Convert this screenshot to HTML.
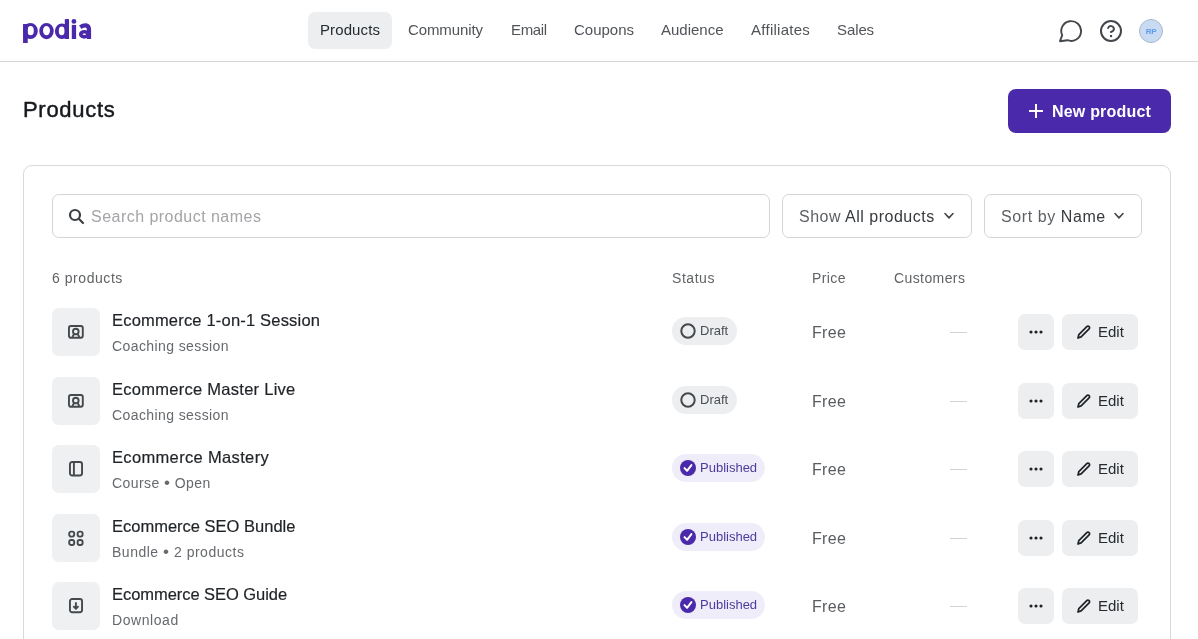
<!DOCTYPE html>
<html><head><meta charset="utf-8">
<style>
*{box-sizing:border-box;margin:0;padding:0}
html,body{width:1198px;height:639px;overflow:hidden;background:#fff;font-family:"Liberation Sans",sans-serif}
.a{position:absolute;white-space:nowrap;will-change:transform}
.hdr{position:absolute;left:0;top:0;width:1198px;height:62px;border-bottom:1px solid #d6d6d6}
.nav{font-size:15px;line-height:20px;color:#505458}
.pill{position:absolute;left:308px;top:12px;width:84px;height:37px;background:#eceef0;border-radius:7px}
.ttl{font-size:22px;line-height:28px;color:#15191d;-webkit-text-stroke:0.45px #15191d}
.btn{position:absolute;left:1008px;top:89px;width:163px;height:44px;background:#4a2aab;border-radius:8px}
.card{position:absolute;left:23px;top:165px;width:1148px;height:600px;border:1px solid #d9d9d9;border-radius:9px}
.inp{position:absolute;top:194px;height:44px;border:1px solid #d5d5d5;border-radius:7px}
.ph{font-size:16px;line-height:20px;color:#a2a4a7}
.dd{font-size:16px;line-height:20px;color:#5c5f63}
.dd b{font-weight:normal;color:#36393d}
.th{font-size:14px;line-height:18px;color:#606366}
.ib{position:absolute;left:52px;width:48px;height:48px;background:#eef0f1;border-radius:7px}
.pt{font-size:16.5px;line-height:20px;color:#1f2327;-webkit-text-stroke:0.2px #1f2327}
.ps{font-size:14px;line-height:18px;color:#66696d}
.bul{font-size:17px;line-height:0;vertical-align:0.5px}
.badge{position:absolute;left:672px;height:28px;border-radius:14px}
.draft{background:#eceef0;width:65px}
.pub{background:#efedf9;width:93px}
.bt{font-size:13px;line-height:16px}
.free{font-size:16px;line-height:20px;color:#595c60}
.dash{position:absolute;left:950px;width:17px;height:1px;background:#d2d3d5}
.sb{position:absolute;height:36px;background:#eceef0;border-radius:7px}
.et{font-size:15px;line-height:20px;color:#272b2f}
</style></head><body>
<div class="hdr"></div>
<!-- logo -->
<svg class="a" style="left:0;top:0" width="100" height="50" viewBox="0 0 100 50" fill="#4a2aab"><path fill-rule="evenodd" d="M23.00 31.0A7.4 8.0 0 1 0 37.80 31.0A7.4 8.0 0 1 0 23.00 31.0ZM27.40 30.7A3.2 4.6 0 1 0 33.80 30.7A3.2 4.6 0 1 0 27.40 30.7Z"/><rect x="23.05" y="24" width="4.7" height="19"/><path fill-rule="evenodd" d="M39.25 31.1A7.25 8.1 0 1 0 53.75 31.1A7.25 8.1 0 1 0 39.25 31.1ZM43.00 30.6A3.5 4.7 0 1 0 50.00 30.6A3.5 4.7 0 1 0 43.00 30.6Z"/><path fill-rule="evenodd" d="M54.90 31.25A7.0 7.75 0 1 0 68.90 31.25A7.0 7.75 0 1 0 54.90 31.25ZM58.80 30.9A2.9 4.3 0 1 0 64.60 30.9A2.9 4.3 0 1 0 58.80 30.9Z"/><rect x="64.8" y="19.05" width="4.2" height="19.95"/><rect x="71.8" y="24.9" width="4.3" height="14.1"/><circle cx="73.95" cy="21.4" r="2.4"/><path d="M80.3 27.2C82.5 25.6 84.5 25.3 86 25.4C88.2 25.8 89 27.5 89 30V39" fill="none" stroke="#4a2aab" stroke-width="4.2"/><ellipse cx="84.3" cy="34.3" rx="3.6" ry="2.6" fill="none" stroke="#4a2aab" stroke-width="3.6"/></svg>
<!-- nav -->
<div class="pill"></div>
<div class="a nav" style="left:320px;top:20px;color:#262b30;letter-spacing:0.1px">Products</div>
<div class="a nav" style="left:408px;top:20px;letter-spacing:-0.1px">Community</div>
<div class="a nav" style="left:511px;top:20px;letter-spacing:-0.35px">Email</div>
<div class="a nav" style="left:574px;top:20px">Coupons</div>
<div class="a nav" style="left:661px;top:20px">Audience</div>
<div class="a nav" style="left:751px;top:20px;letter-spacing:0.27px">Affiliates</div>
<div class="a nav" style="left:837px;top:20px;letter-spacing:-0.1px">Sales</div>
<!-- right icons -->
<svg class="a" style="left:1058px;top:19px" width="24" height="24" viewBox="0 0 24 24" fill="none" stroke="#44484c" stroke-width="1.9" stroke-linejoin="round"><path d="M2 22.2L4.2 16.2A9.9 9.9 0 1 1 9.5 21.2Z"/></svg>
<svg class="a" style="left:1099px;top:19px" width="24" height="24" viewBox="0 0 24 24" fill="none" stroke="#44484c" stroke-width="2" stroke-linecap="round"><circle cx="12" cy="12" r="10"/><path d="M9.1 9a3 3 0 0 1 5.8 1c0 2-3 3-3 3"/><rect x="11" y="16" width="2.1" height="2.1" fill="#44484c" stroke="none"/></svg>
<div class="a" style="left:1139px;top:19px;width:24px;height:24px;border-radius:50%;background:#c8dbf3;border:1px solid #a9b9cc;font-size:8px;line-height:23px;text-align:center;font-weight:bold;color:#5a9be6;letter-spacing:-0.4px">RP</div>
<!-- title -->
<div class="a ttl" style="left:23px;top:96px;letter-spacing:0.7px">Products</div>
<div class="btn"></div>
<svg class="a" style="left:1028px;top:103px" width="16" height="16" viewBox="0 0 16 16" stroke="#fff" stroke-width="2"><path d="M8 1v14M1 8h14"/></svg>
<div class="a" style="left:1052px;top:102px;font-size:16px;line-height:20px;font-weight:bold;color:#fff;letter-spacing:0.2px">New product</div>
<!-- card -->
<div class="card"></div>
<div class="inp" style="left:52px;width:718px"></div>
<svg class="a" style="left:68px;top:208px" width="17" height="17" viewBox="0 0 17 17" fill="none" stroke="#3c4145" stroke-width="2.2" stroke-linecap="round"><circle cx="7" cy="7" r="5"/><path d="M10.8 10.8l4.2 4.2"/></svg>
<div class="a ph" style="left:91px;top:207px;letter-spacing:0.47px">Search product names</div>
<div class="inp" style="left:782px;width:190px"></div>
<div class="a dd" style="left:799px;top:207px;letter-spacing:0.5px">Show <b>All products</b></div>
<svg class="a" style="left:943px;top:211px" width="12" height="10" viewBox="0 0 12 10" fill="none" stroke="#44484c" stroke-width="1.6" stroke-linecap="round" stroke-linejoin="round"><path d="M2 2.5l4 4.4 4-4.4"/></svg>
<div class="inp" style="left:984px;width:158px"></div>
<div class="a dd" style="left:1001px;top:207px;letter-spacing:0.58px">Sort by <b>Name</b></div>
<svg class="a" style="left:1113px;top:211px" width="12" height="10" viewBox="0 0 12 10" fill="none" stroke="#44484c" stroke-width="1.6" stroke-linecap="round" stroke-linejoin="round"><path d="M2 2.5l4 4.4 4-4.4"/></svg>
<!-- table header -->
<div class="a th" style="left:52px;top:269px;letter-spacing:0.55px">6 products</div>
<div class="a th" style="left:672px;top:269px;letter-spacing:0.55px">Status</div>
<div class="a th" style="left:812px;top:269px;letter-spacing:0.4px">Price</div>
<div class="a th" style="left:894px;top:269px;letter-spacing:0.4px">Customers</div>
<div class="ib" style="top:308.0px"></div>
<svg class="a" style="left:68px;top:324.0px" width="16" height="16" viewBox="0 0 16 16" fill="none" stroke="#45494d" stroke-width="1.9"><rect x="0.95" y="1.95" width="13.85" height="11.85" rx="2"/><circle cx="7.8" cy="7.5" r="2.8"/><path d="M4.3 13L6 10.3M11.4 13L9.7 10.3"/></svg>
<div class="a pt" style="left:112px;top:310.0px;letter-spacing:0.19px">Ecommerce 1-on-1 Session</div>
<div class="a ps" style="left:112px;top:337.0px;letter-spacing:0.4px">Coaching session</div>
<div class="badge draft" style="top:317.0px"></div>
<svg class="a" style="left:679px;top:322.0px" width="18" height="18" viewBox="0 0 18 18" fill="none" stroke="#45494d" stroke-width="2"><circle cx="9" cy="9" r="6.7"/></svg>
<div class="a bt" style="left:700px;top:323.0px;color:#4a4f54">Draft</div>
<div class="a free" style="left:812px;top:323.0px;letter-spacing:0.3px">Free</div>
<div class="dash" style="top:332.0px"></div>
<div class="sb" style="left:1018px;top:314.0px;width:36px"></div>
<svg class="a" style="left:1028px;top:330.0px" width="16" height="4" viewBox="0 0 16 4" fill="#1f2327"><circle cx="3" cy="2" r="1.55"/><circle cx="8" cy="2" r="1.55"/><circle cx="13" cy="2" r="1.55"/></svg>
<div class="sb" style="left:1062px;top:314.0px;width:76px"></div>
<svg class="a" style="left:1076px;top:324.0px" width="16" height="16" viewBox="0 0 16 16" fill="none" stroke="#1f2327" stroke-width="1.7" stroke-linejoin="round"><path d="M2 14l.8-3.4L10.8 2.6a1.6 1.6 0 0 1 2.3 2.3L5.1 12.9z"/></svg>
<div class="a et" style="left:1098px;top:322.0px">Edit</div>
<div class="ib" style="top:376.5px"></div>
<svg class="a" style="left:68px;top:392.5px" width="16" height="16" viewBox="0 0 16 16" fill="none" stroke="#45494d" stroke-width="1.9"><rect x="0.95" y="1.95" width="13.85" height="11.85" rx="2"/><circle cx="7.8" cy="7.5" r="2.8"/><path d="M4.3 13L6 10.3M11.4 13L9.7 10.3"/></svg>
<div class="a pt" style="left:112px;top:378.5px;letter-spacing:0.27px">Ecommerce Master Live</div>
<div class="a ps" style="left:112px;top:405.5px;letter-spacing:0.4px">Coaching session</div>
<div class="badge draft" style="top:385.5px"></div>
<svg class="a" style="left:679px;top:390.5px" width="18" height="18" viewBox="0 0 18 18" fill="none" stroke="#45494d" stroke-width="2"><circle cx="9" cy="9" r="6.7"/></svg>
<div class="a bt" style="left:700px;top:391.5px;color:#4a4f54">Draft</div>
<div class="a free" style="left:812px;top:391.5px;letter-spacing:0.3px">Free</div>
<div class="dash" style="top:400.5px"></div>
<div class="sb" style="left:1018px;top:382.5px;width:36px"></div>
<svg class="a" style="left:1028px;top:398.5px" width="16" height="4" viewBox="0 0 16 4" fill="#1f2327"><circle cx="3" cy="2" r="1.55"/><circle cx="8" cy="2" r="1.55"/><circle cx="13" cy="2" r="1.55"/></svg>
<div class="sb" style="left:1062px;top:382.5px;width:76px"></div>
<svg class="a" style="left:1076px;top:392.5px" width="16" height="16" viewBox="0 0 16 16" fill="none" stroke="#1f2327" stroke-width="1.7" stroke-linejoin="round"><path d="M2 14l.8-3.4L10.8 2.6a1.6 1.6 0 0 1 2.3 2.3L5.1 12.9z"/></svg>
<div class="a et" style="left:1098px;top:390.5px">Edit</div>
<div class="ib" style="top:445.0px"></div>
<svg class="a" style="left:68px;top:461.0px" width="16" height="16" viewBox="0 0 16 16" fill="none" stroke="#45494d" stroke-width="1.9"><rect x="1.95" y="0.95" width="12.1" height="13.6" rx="2.2"/><path d="M5.9 1v13.5"/></svg>
<div class="a pt" style="left:112px;top:447.0px;letter-spacing:0.34px">Ecommerce Mastery</div>
<div class="a ps" style="left:112px;top:474.0px;letter-spacing:0.43px">Course <span class="bul">•</span> Open</div>
<div class="badge pub" style="top:454.0px"></div>
<svg class="a" style="left:680px;top:460.0px" width="16" height="16" viewBox="0 0 16 16"><circle cx="8" cy="8" r="8" fill="#4a2aab"/><path d="M4.5 8.1L7.1 10.8L11.4 5.1" fill="none" stroke="#fff" stroke-width="2" stroke-linecap="round" stroke-linejoin="round"/></svg>
<div class="a bt" style="left:700px;top:460.0px;color:#4d3b9e">Published</div>
<div class="a free" style="left:812px;top:460.0px;letter-spacing:0.3px">Free</div>
<div class="dash" style="top:469.0px"></div>
<div class="sb" style="left:1018px;top:451.0px;width:36px"></div>
<svg class="a" style="left:1028px;top:467.0px" width="16" height="4" viewBox="0 0 16 4" fill="#1f2327"><circle cx="3" cy="2" r="1.55"/><circle cx="8" cy="2" r="1.55"/><circle cx="13" cy="2" r="1.55"/></svg>
<div class="sb" style="left:1062px;top:451.0px;width:76px"></div>
<svg class="a" style="left:1076px;top:461.0px" width="16" height="16" viewBox="0 0 16 16" fill="none" stroke="#1f2327" stroke-width="1.7" stroke-linejoin="round"><path d="M2 14l.8-3.4L10.8 2.6a1.6 1.6 0 0 1 2.3 2.3L5.1 12.9z"/></svg>
<div class="a et" style="left:1098px;top:459.0px">Edit</div>
<div class="ib" style="top:513.5px"></div>
<svg class="a" style="left:68px;top:529.5px" width="16" height="16" viewBox="0 0 16 16" fill="none" stroke="#45494d" stroke-width="1.9"><rect x="1.2" y="1.6" width="5" height="5" rx="2"/><rect x="9.6" y="1.6" width="5" height="5" rx="2"/><rect x="1.2" y="10" width="5" height="5" rx="2"/><rect x="9.6" y="10" width="5" height="5" rx="2"/></svg>
<div class="a pt" style="left:112px;top:515.5px;letter-spacing:0.0px">Ecommerce SEO Bundle</div>
<div class="a ps" style="left:112px;top:542.5px;letter-spacing:0.51px">Bundle <span class="bul">•</span> 2 products</div>
<div class="badge pub" style="top:522.5px"></div>
<svg class="a" style="left:680px;top:528.5px" width="16" height="16" viewBox="0 0 16 16"><circle cx="8" cy="8" r="8" fill="#4a2aab"/><path d="M4.5 8.1L7.1 10.8L11.4 5.1" fill="none" stroke="#fff" stroke-width="2" stroke-linecap="round" stroke-linejoin="round"/></svg>
<div class="a bt" style="left:700px;top:528.5px;color:#4d3b9e">Published</div>
<div class="a free" style="left:812px;top:528.5px;letter-spacing:0.3px">Free</div>
<div class="dash" style="top:537.5px"></div>
<div class="sb" style="left:1018px;top:519.5px;width:36px"></div>
<svg class="a" style="left:1028px;top:535.5px" width="16" height="4" viewBox="0 0 16 4" fill="#1f2327"><circle cx="3" cy="2" r="1.55"/><circle cx="8" cy="2" r="1.55"/><circle cx="13" cy="2" r="1.55"/></svg>
<div class="sb" style="left:1062px;top:519.5px;width:76px"></div>
<svg class="a" style="left:1076px;top:529.5px" width="16" height="16" viewBox="0 0 16 16" fill="none" stroke="#1f2327" stroke-width="1.7" stroke-linejoin="round"><path d="M2 14l.8-3.4L10.8 2.6a1.6 1.6 0 0 1 2.3 2.3L5.1 12.9z"/></svg>
<div class="a et" style="left:1098px;top:527.5px">Edit</div>
<div class="ib" style="top:582.0px"></div>
<svg class="a" style="left:68px;top:598.0px" width="16" height="16" viewBox="0 0 16 16" fill="none" stroke="#45494d" stroke-width="1.9"><rect x="1.95" y="0.95" width="12.1" height="13.35" rx="2.2"/><path d="M7.9 4.2V10.6M5.3 8.2L7.9 10.8L10.5 8.2" stroke-linejoin="round"/></svg>
<div class="a pt" style="left:112px;top:584.0px;letter-spacing:-0.05px">Ecommerce SEO Guide</div>
<div class="a ps" style="left:112px;top:611.0px;letter-spacing:0.56px">Download</div>
<div class="badge pub" style="top:591.0px"></div>
<svg class="a" style="left:680px;top:597.0px" width="16" height="16" viewBox="0 0 16 16"><circle cx="8" cy="8" r="8" fill="#4a2aab"/><path d="M4.5 8.1L7.1 10.8L11.4 5.1" fill="none" stroke="#fff" stroke-width="2" stroke-linecap="round" stroke-linejoin="round"/></svg>
<div class="a bt" style="left:700px;top:597.0px;color:#4d3b9e">Published</div>
<div class="a free" style="left:812px;top:597.0px;letter-spacing:0.3px">Free</div>
<div class="dash" style="top:606.0px"></div>
<div class="sb" style="left:1018px;top:588.0px;width:36px"></div>
<svg class="a" style="left:1028px;top:604.0px" width="16" height="4" viewBox="0 0 16 4" fill="#1f2327"><circle cx="3" cy="2" r="1.55"/><circle cx="8" cy="2" r="1.55"/><circle cx="13" cy="2" r="1.55"/></svg>
<div class="sb" style="left:1062px;top:588.0px;width:76px"></div>
<svg class="a" style="left:1076px;top:598.0px" width="16" height="16" viewBox="0 0 16 16" fill="none" stroke="#1f2327" stroke-width="1.7" stroke-linejoin="round"><path d="M2 14l.8-3.4L10.8 2.6a1.6 1.6 0 0 1 2.3 2.3L5.1 12.9z"/></svg>
<div class="a et" style="left:1098px;top:596.0px">Edit</div>
<div class="ib" style="top:650.5px"></div>
<svg class="a" style="left:68px;top:666.5px" width="16" height="16" viewBox="0 0 16 16" fill="none" stroke="#45494d" stroke-width="1.9"><rect x="0.95" y="1.95" width="13.85" height="11.85" rx="2"/><circle cx="7.8" cy="7.5" r="2.8"/><path d="M4.3 13L6 10.3M11.4 13L9.7 10.3"/></svg>
<div class="a pt" style="left:112px;top:652.5px;letter-spacing:0.1px">Ecommerce SEO Workshop</div>
<div class="a ps" style="left:112px;top:679.5px;letter-spacing:0.33px">Webinar</div>
<div class="badge pub" style="top:659.5px"></div>
<svg class="a" style="left:680px;top:665.5px" width="16" height="16" viewBox="0 0 16 16"><circle cx="8" cy="8" r="8" fill="#4a2aab"/><path d="M4.5 8.1L7.1 10.8L11.4 5.1" fill="none" stroke="#fff" stroke-width="2" stroke-linecap="round" stroke-linejoin="round"/></svg>
<div class="a bt" style="left:700px;top:665.5px;color:#4d3b9e">Published</div>
<div class="a free" style="left:812px;top:665.5px;letter-spacing:0.3px">Free</div>
<div class="dash" style="top:674.5px"></div>
<div class="sb" style="left:1018px;top:656.5px;width:36px"></div>
<svg class="a" style="left:1028px;top:672.5px" width="16" height="4" viewBox="0 0 16 4" fill="#1f2327"><circle cx="3" cy="2" r="1.55"/><circle cx="8" cy="2" r="1.55"/><circle cx="13" cy="2" r="1.55"/></svg>
<div class="sb" style="left:1062px;top:656.5px;width:76px"></div>
<svg class="a" style="left:1076px;top:666.5px" width="16" height="16" viewBox="0 0 16 16" fill="none" stroke="#1f2327" stroke-width="1.7" stroke-linejoin="round"><path d="M2 14l.8-3.4L10.8 2.6a1.6 1.6 0 0 1 2.3 2.3L5.1 12.9z"/></svg>
<div class="a et" style="left:1098px;top:664.5px">Edit</div>
</body></html>
